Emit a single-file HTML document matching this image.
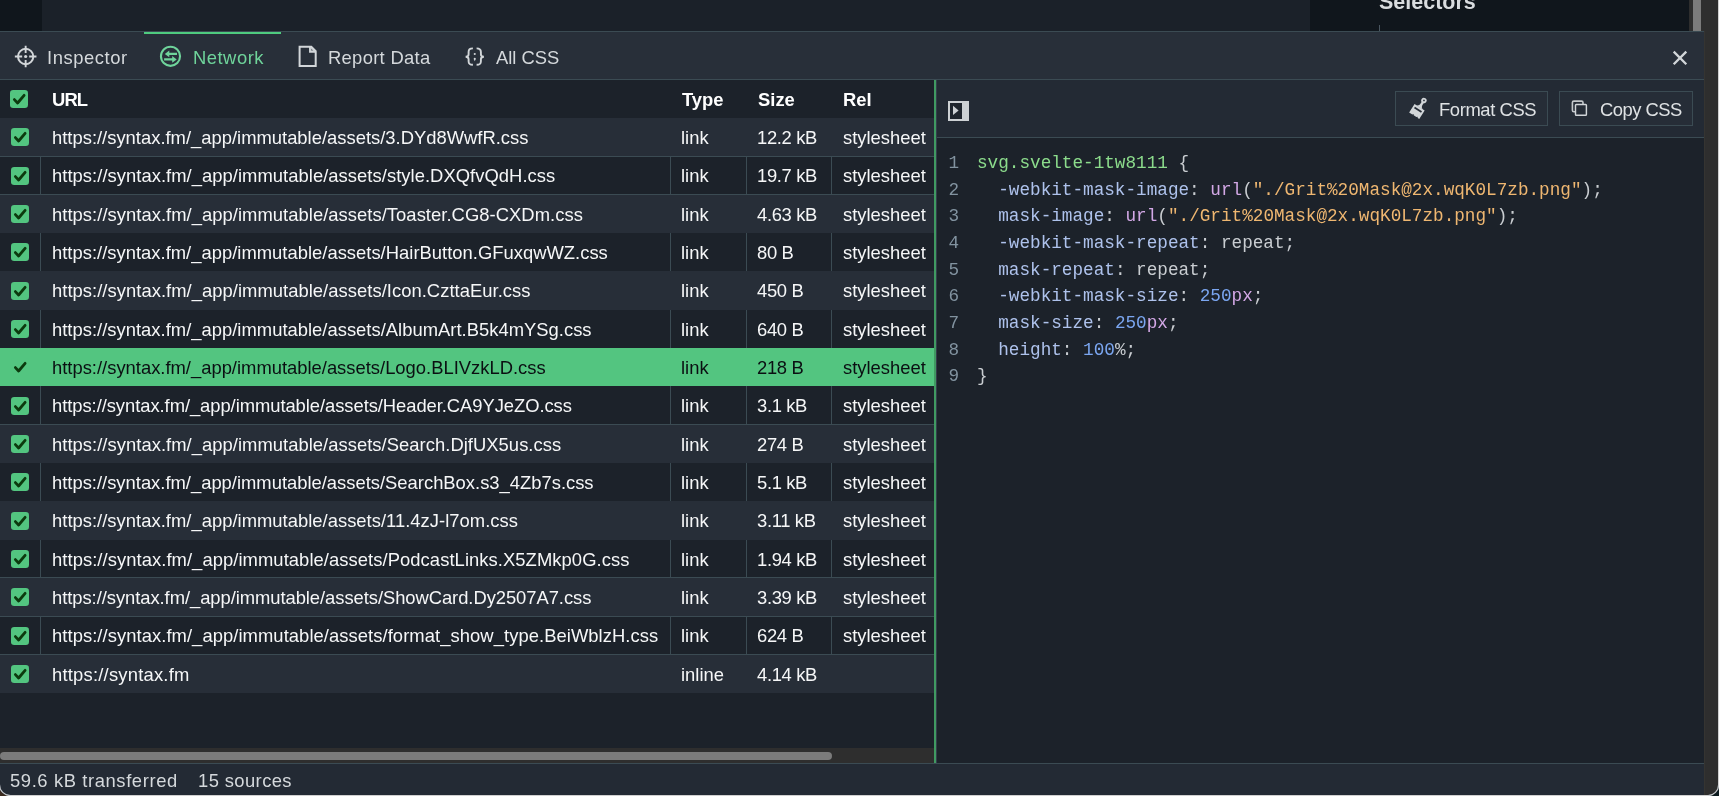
<!DOCTYPE html>
<html><head><meta charset="utf-8">
<style>
*{margin:0;padding:0;box-sizing:border-box}
html,body{width:1719px;height:796px;overflow:hidden;background:#1b2129}
body{position:relative;font-family:"Liberation Sans",sans-serif;font-size:18.4px;color:#f6f7f8}
.abs{position:absolute}
.t{position:absolute;white-space:nowrap;line-height:20px;height:20px;will-change:transform}
.row{position:absolute;left:0;width:934px;height:38.833px}
.vd{position:absolute;top:0;bottom:0;width:1px;background:#3b4b53}
.cbw{position:absolute;left:11px;top:10.2px;width:18px;height:18px}
.cb{display:block}
.url{letter-spacing:0px} .sz{letter-spacing:-0.35px}
.code{position:absolute;will-change:transform;white-space:pre;font-family:"Liberation Mono",monospace;font-size:17.68px;line-height:20px;height:20px;color:#c9cdd1}
.ln{position:absolute;will-change:transform;font-family:"Liberation Mono",monospace;font-size:17.68px;line-height:20px;height:20px;color:#8293a0;text-align:right;width:20px}
.sel{color:#8cdc8c} .pr{color:#aec2ec} .fn{color:#d3a8e6} .s{color:#efb771} .n{color:#7ba6f0} .u{color:#d3a8e6} .p{color:#c9cdd1} .v{color:#c9cdd1}
</style></head><body>

<div class="abs" style="left:0;top:0;width:42px;height:31px;background:#10161c"></div>
<div class="abs" style="left:1310px;top:0;width:379px;height:31px;background:#10161c"></div>
<div class="t" style="left:1379px;top:-8.35px;font-size:21.5px;font-weight:bold;color:#d9dcdf">Selectors</div>
<div class="abs" style="left:1379px;top:25px;width:1px;height:6px;background:#4a5660"></div>
<div class="abs" style="left:1689px;top:0;width:15px;height:31px;background:#2e2e2e"></div>
<div class="abs" style="left:1693px;top:0;width:8px;height:31px;background:#7b7b7b"></div>
<div class="abs" style="left:0;top:31px;width:1704px;height:49px;background:#282f39;border-top:1px solid #3b4b53;border-bottom:1px solid #3b4b53"></div>
<div class="abs" style="left:144px;top:32px;width:137px;height:2px;background:#4fcb7f"></div>
<svg class="abs" style="left:14px;top:45px" width="23" height="23" viewBox="0 0 23 23" fill="none" stroke="#d2d6d9" stroke-width="1.9">
<circle cx="11.65" cy="11.5" r="7.65" stroke-width="2"/><path d="M11.65 0.7V8.0M11.65 15.0V22.3M0.85 11.5H8.15M15.15 11.5H22.45"/><circle cx="11.65" cy="11.5" r="1.6" fill="#d2d6d9" stroke="none"/></svg>
<div class="t" style="left:47px;top:47.62px;color:#d5d9dc;letter-spacing:0.55px">Inspector</div>
<svg class="abs" style="left:159px;top:45px" width="23" height="23" viewBox="0 0 23 23" fill="#6fd49b" stroke="none">
<circle cx="11.5" cy="11.3" r="9.55" fill="none" stroke="#6fd49b" stroke-width="2.1"/>
<path d="M5.8 9.0L10.3 5.6V7.85H18.0V10.05H10.3V12.3Z"/>
<path d="M17.7 14.4L13.2 11.1V13.3H5.1V15.5H13.2V17.8Z"/></svg>
<div class="t" style="left:193px;top:47.62px;color:#6fd49b;letter-spacing:0.5px">Network</div>
<svg class="abs" style="left:297px;top:44px" width="22" height="24" viewBox="0 0 22 24" fill="none" stroke="#d2d6d9" stroke-width="2">
<path d="M2.6 2.8H14.3L18.7 7.2V21.9H2.6Z" stroke-linejoin="miter"/><path d="M13.0 2.8V7.9H18.7" stroke-width="1.9"/><path d="M13.9 3.6L17.9 7.3H13.9Z" fill="#d2d6d9" stroke="none"/><path d="M14.3 5.0L16.0 6.6H14.3Z" fill="#282f39" stroke="none"/></svg>
<div class="t" style="left:328px;top:47.62px;color:#d5d9dc;letter-spacing:0.3px">Report Data</div>
<svg class="abs" style="left:463px;top:45px" width="23" height="23" viewBox="0 0 23 23" fill="none" stroke="#d2d6d9" stroke-width="1.9">
<path d="M9.9 3.4C6.6 3.4 5.6 4.4 5.6 7.0V9.2C5.6 10.7 4.7 11.7 2.6 11.7C4.7 11.7 5.6 12.7 5.6 14.2V16.2C5.6 18.8 6.6 19.7 9.9 19.7"/>
<path d="M13.6 3.4C16.9 3.4 17.9 4.4 17.9 7.0V9.2C17.9 10.7 18.8 11.7 20.9 11.7C18.8 11.7 17.9 12.7 17.9 14.2V16.2C17.9 18.8 16.9 19.7 13.6 19.7"/>
<circle cx="11.75" cy="9.0" r="1.05" fill="#d2d6d9" stroke="none"/><path d="M10.7 13.9A1.05 1.05 0 0 1 12.8 13.9L11.75 16.3Z" fill="#d2d6d9" stroke="none"/></svg>
<div class="t" style="left:496px;top:47.62px;color:#d5d9dc">All CSS</div>
<svg class="abs" style="left:1666px;top:44px" width="28" height="28" viewBox="0 0 28 28" stroke="#d2d6d9" stroke-width="2.3"><path d="M7.7 7.6L20.3 20.2M20.3 7.6L7.7 20.2"/></svg>
<div class="abs" style="left:0;top:80px;width:934px;height:668px;background:#1c222a"></div>
<div class="cbw" style="left:10px;top:90px"><svg class="cb" width="18" height="18" viewBox="0 0 18 18"><rect x="0" y="0" width="18" height="18" rx="3.2" fill="#53c580"/><path d="M4.4 9.6 L7.6 13.0 L14.1 5.3" fill="none" stroke="#0c3a0e" stroke-width="2.8" stroke-linecap="round" stroke-linejoin="round"/></svg></div>
<div class="t" style="left:52px;top:89.62px;font-weight:bold;color:#ffffff;letter-spacing:-0.9px">URL</div>
<div class="t" style="left:682px;top:89.62px;font-weight:bold;color:#ffffff">Type</div>
<div class="t" style="left:758px;top:89.62px;font-weight:bold;color:#ffffff">Size</div>
<div class="t" style="left:843px;top:89.62px;font-weight:bold;color:#ffffff">Rel</div>
<div class="row" style="top:118.000px;background:#272e38;color:#f6f7f8;"><div class="cbw"><svg class="cb" width="18" height="18" viewBox="0 0 18 18"><rect x="0" y="0" width="18" height="18" rx="3.2" fill="#53c580"/><path d="M4.4 9.6 L7.6 13.0 L14.1 5.3" fill="none" stroke="#0c3a0e" stroke-width="2.8" stroke-linecap="round" stroke-linejoin="round"/></svg></div><div class="t url" style="left:52px;top:10.22px;letter-spacing:0.002px">https://syntax.fm/_app/immutable/assets/3.DYd8WwfR.css</div><div class="t" style="left:681px;top:10.22px">link</div><div class="t sz" style="left:757px;top:10.22px">12.2 kB</div><div class="t" style="left:843px;top:10.22px">stylesheet</div></div>
<div class="row" style="top:156.333px;background:#1c222a;color:#f6f7f8;"><div class="vd" style="left:40px"></div><div class="vd" style="left:670px"></div><div class="vd" style="left:746px"></div><div class="vd" style="left:831px"></div><div class="cbw"><svg class="cb" width="18" height="18" viewBox="0 0 18 18"><rect x="0" y="0" width="18" height="18" rx="3.2" fill="#53c580"/><path d="M4.4 9.6 L7.6 13.0 L14.1 5.3" fill="none" stroke="#0c3a0e" stroke-width="2.8" stroke-linecap="round" stroke-linejoin="round"/></svg></div><div class="t url" style="left:52px;top:9.89px;letter-spacing:0.042px">https://syntax.fm/_app/immutable/assets/style.DXQfvQdH.css</div><div class="t" style="left:681px;top:9.89px">link</div><div class="t sz" style="left:757px;top:9.89px">19.7 kB</div><div class="t" style="left:843px;top:9.89px">stylesheet</div></div>
<div class="row" style="top:194.666px;background:#272e38;color:#f6f7f8;"><div class="cbw"><svg class="cb" width="18" height="18" viewBox="0 0 18 18"><rect x="0" y="0" width="18" height="18" rx="3.2" fill="#53c580"/><path d="M4.4 9.6 L7.6 13.0 L14.1 5.3" fill="none" stroke="#0c3a0e" stroke-width="2.8" stroke-linecap="round" stroke-linejoin="round"/></svg></div><div class="t url" style="left:52px;top:10.56px;letter-spacing:0.041px">https://syntax.fm/_app/immutable/assets/Toaster.CG8-CXDm.css</div><div class="t" style="left:681px;top:10.56px">link</div><div class="t sz" style="left:757px;top:10.56px">4.63 kB</div><div class="t" style="left:843px;top:10.56px">stylesheet</div></div>
<div class="row" style="top:232.999px;background:#1c222a;color:#f6f7f8;"><div class="vd" style="left:40px"></div><div class="vd" style="left:670px"></div><div class="vd" style="left:746px"></div><div class="vd" style="left:831px"></div><div class="cbw"><svg class="cb" width="18" height="18" viewBox="0 0 18 18"><rect x="0" y="0" width="18" height="18" rx="3.2" fill="#53c580"/><path d="M4.4 9.6 L7.6 13.0 L14.1 5.3" fill="none" stroke="#0c3a0e" stroke-width="2.8" stroke-linecap="round" stroke-linejoin="round"/></svg></div><div class="t url" style="left:52px;top:10.23px;letter-spacing:0.013px">https://syntax.fm/_app/immutable/assets/HairButton.GFuxqwWZ.css</div><div class="t" style="left:681px;top:10.23px">link</div><div class="t sz" style="left:757px;top:10.23px">80 B</div><div class="t" style="left:843px;top:10.23px">stylesheet</div></div>
<div class="row" style="top:271.332px;background:#272e38;color:#f6f7f8;"><div class="cbw"><svg class="cb" width="18" height="18" viewBox="0 0 18 18"><rect x="0" y="0" width="18" height="18" rx="3.2" fill="#53c580"/><path d="M4.4 9.6 L7.6 13.0 L14.1 5.3" fill="none" stroke="#0c3a0e" stroke-width="2.8" stroke-linecap="round" stroke-linejoin="round"/></svg></div><div class="t url" style="left:52px;top:9.89px;letter-spacing:0.039px">https://syntax.fm/_app/immutable/assets/Icon.CzttaEur.css</div><div class="t" style="left:681px;top:9.89px">link</div><div class="t sz" style="left:757px;top:9.89px">450 B</div><div class="t" style="left:843px;top:9.89px">stylesheet</div></div>
<div class="row" style="top:309.665px;background:#1c222a;color:#f6f7f8;"><div class="vd" style="left:40px"></div><div class="vd" style="left:670px"></div><div class="vd" style="left:746px"></div><div class="vd" style="left:831px"></div><div class="cbw"><svg class="cb" width="18" height="18" viewBox="0 0 18 18"><rect x="0" y="0" width="18" height="18" rx="3.2" fill="#53c580"/><path d="M4.4 9.6 L7.6 13.0 L14.1 5.3" fill="none" stroke="#0c3a0e" stroke-width="2.8" stroke-linecap="round" stroke-linejoin="round"/></svg></div><div class="t url" style="left:52px;top:10.56px;letter-spacing:0.015px">https://syntax.fm/_app/immutable/assets/AlbumArt.B5k4mYSg.css</div><div class="t" style="left:681px;top:10.56px">link</div><div class="t sz" style="left:757px;top:10.56px">640 B</div><div class="t" style="left:843px;top:10.56px">stylesheet</div></div>
<div class="row" style="top:347.998px;background:#53c580;color:#0b0f12;"><div class="cbw"><svg class="cb" width="18" height="18" viewBox="0 0 18 18"><rect x="0" y="0" width="18" height="18" rx="3.2" fill="#53c580"/><path d="M4.4 9.6 L7.6 13.0 L14.1 5.3" fill="none" stroke="#0c3a0e" stroke-width="2.8" stroke-linecap="round" stroke-linejoin="round"/></svg></div><div class="t url" style="left:52px;top:10.23px;letter-spacing:-0.002px">https://syntax.fm/_app/immutable/assets/Logo.BLIVzkLD.css</div><div class="t" style="left:681px;top:10.23px">link</div><div class="t sz" style="left:757px;top:10.23px">218 B</div><div class="t" style="left:843px;top:10.23px">stylesheet</div></div>
<div class="row" style="top:386.331px;background:#1c222a;color:#f6f7f8;"><div class="vd" style="left:40px"></div><div class="vd" style="left:670px"></div><div class="vd" style="left:746px"></div><div class="vd" style="left:831px"></div><div class="cbw"><svg class="cb" width="18" height="18" viewBox="0 0 18 18"><rect x="0" y="0" width="18" height="18" rx="3.2" fill="#53c580"/><path d="M4.4 9.6 L7.6 13.0 L14.1 5.3" fill="none" stroke="#0c3a0e" stroke-width="2.8" stroke-linecap="round" stroke-linejoin="round"/></svg></div><div class="t url" style="left:52px;top:9.89px;letter-spacing:-0.059px">https://syntax.fm/_app/immutable/assets/Header.CA9YJeZO.css</div><div class="t" style="left:681px;top:9.89px">link</div><div class="t sz" style="left:757px;top:9.89px">3.1 kB</div><div class="t" style="left:843px;top:9.89px">stylesheet</div></div>
<div class="row" style="top:424.664px;background:#272e38;color:#f6f7f8;"><div class="cbw"><svg class="cb" width="18" height="18" viewBox="0 0 18 18"><rect x="0" y="0" width="18" height="18" rx="3.2" fill="#53c580"/><path d="M4.4 9.6 L7.6 13.0 L14.1 5.3" fill="none" stroke="#0c3a0e" stroke-width="2.8" stroke-linecap="round" stroke-linejoin="round"/></svg></div><div class="t url" style="left:52px;top:10.56px;letter-spacing:0.038px">https://syntax.fm/_app/immutable/assets/Search.DjfUX5us.css</div><div class="t" style="left:681px;top:10.56px">link</div><div class="t sz" style="left:757px;top:10.56px">274 B</div><div class="t" style="left:843px;top:10.56px">stylesheet</div></div>
<div class="row" style="top:462.997px;background:#1c222a;color:#f6f7f8;"><div class="vd" style="left:40px"></div><div class="vd" style="left:670px"></div><div class="vd" style="left:746px"></div><div class="vd" style="left:831px"></div><div class="cbw"><svg class="cb" width="18" height="18" viewBox="0 0 18 18"><rect x="0" y="0" width="18" height="18" rx="3.2" fill="#53c580"/><path d="M4.4 9.6 L7.6 13.0 L14.1 5.3" fill="none" stroke="#0c3a0e" stroke-width="2.8" stroke-linecap="round" stroke-linejoin="round"/></svg></div><div class="t url" style="left:52px;top:10.23px;letter-spacing:-0.003px">https://syntax.fm/_app/immutable/assets/SearchBox.s3_4Zb7s.css</div><div class="t" style="left:681px;top:10.23px">link</div><div class="t sz" style="left:757px;top:10.23px">5.1 kB</div><div class="t" style="left:843px;top:10.23px">stylesheet</div></div>
<div class="row" style="top:501.330px;background:#272e38;color:#f6f7f8;"><div class="cbw"><svg class="cb" width="18" height="18" viewBox="0 0 18 18"><rect x="0" y="0" width="18" height="18" rx="3.2" fill="#53c580"/><path d="M4.4 9.6 L7.6 13.0 L14.1 5.3" fill="none" stroke="#0c3a0e" stroke-width="2.8" stroke-linecap="round" stroke-linejoin="round"/></svg></div><div class="t url" style="left:52px;top:9.89px;letter-spacing:0.022px">https://syntax.fm/_app/immutable/assets/11.4zJ-l7om.css</div><div class="t" style="left:681px;top:9.89px">link</div><div class="t sz" style="left:757px;top:9.89px">3.11 kB</div><div class="t" style="left:843px;top:9.89px">stylesheet</div></div>
<div class="row" style="top:539.663px;background:#1c222a;color:#f6f7f8;"><div class="vd" style="left:40px"></div><div class="vd" style="left:670px"></div><div class="vd" style="left:746px"></div><div class="vd" style="left:831px"></div><div class="cbw"><svg class="cb" width="18" height="18" viewBox="0 0 18 18"><rect x="0" y="0" width="18" height="18" rx="3.2" fill="#53c580"/><path d="M4.4 9.6 L7.6 13.0 L14.1 5.3" fill="none" stroke="#0c3a0e" stroke-width="2.8" stroke-linecap="round" stroke-linejoin="round"/></svg></div><div class="t url" style="left:52px;top:10.56px;letter-spacing:0.062px">https://syntax.fm/_app/immutable/assets/PodcastLinks.X5ZMkp0G.css</div><div class="t" style="left:681px;top:10.56px">link</div><div class="t sz" style="left:757px;top:10.56px">1.94 kB</div><div class="t" style="left:843px;top:10.56px">stylesheet</div></div>
<div class="row" style="top:577.996px;background:#272e38;color:#f6f7f8;"><div class="cbw"><svg class="cb" width="18" height="18" viewBox="0 0 18 18"><rect x="0" y="0" width="18" height="18" rx="3.2" fill="#53c580"/><path d="M4.4 9.6 L7.6 13.0 L14.1 5.3" fill="none" stroke="#0c3a0e" stroke-width="2.8" stroke-linecap="round" stroke-linejoin="round"/></svg></div><div class="t url" style="left:52px;top:10.23px;letter-spacing:-0.057px">https://syntax.fm/_app/immutable/assets/ShowCard.Dy2507A7.css</div><div class="t" style="left:681px;top:10.23px">link</div><div class="t sz" style="left:757px;top:10.23px">3.39 kB</div><div class="t" style="left:843px;top:10.23px">stylesheet</div></div>
<div class="row" style="top:616.329px;background:#1c222a;color:#f6f7f8;"><div class="vd" style="left:40px"></div><div class="vd" style="left:670px"></div><div class="vd" style="left:746px"></div><div class="vd" style="left:831px"></div><div class="cbw"><svg class="cb" width="18" height="18" viewBox="0 0 18 18"><rect x="0" y="0" width="18" height="18" rx="3.2" fill="#53c580"/><path d="M4.4 9.6 L7.6 13.0 L14.1 5.3" fill="none" stroke="#0c3a0e" stroke-width="2.8" stroke-linecap="round" stroke-linejoin="round"/></svg></div><div class="t url" style="left:52px;top:9.90px;letter-spacing:0.062px">https://syntax.fm/_app/immutable/assets/format_show_type.BeiWblzH.css</div><div class="t" style="left:681px;top:9.90px">link</div><div class="t sz" style="left:757px;top:9.90px">624 B</div><div class="t" style="left:843px;top:9.90px">stylesheet</div></div>
<div class="row" style="top:654.662px;background:#272e38;color:#f6f7f8;height:38.4px;"><div class="cbw"><svg class="cb" width="18" height="18" viewBox="0 0 18 18"><rect x="0" y="0" width="18" height="18" rx="3.2" fill="#53c580"/><path d="M4.4 9.6 L7.6 13.0 L14.1 5.3" fill="none" stroke="#0c3a0e" stroke-width="2.8" stroke-linecap="round" stroke-linejoin="round"/></svg></div><div class="t url" style="left:52px;top:10.56px;letter-spacing:0.213px">https://syntax.fm</div><div class="t" style="left:681px;top:10.56px">inline</div><div class="t sz" style="left:757px;top:10.56px">4.14 kB</div></div>
<div class="abs" style="left:0;top:156px;width:934px;height:1px;background:#3b4b53"></div>
<div class="abs" style="left:0;top:194px;width:934px;height:1px;background:#3b4b53"></div>
<div class="abs" style="left:0;top:424px;width:934px;height:1px;background:#3b4b53"></div>
<div class="abs" style="left:0;top:577px;width:934px;height:1px;background:#3b4b53"></div>
<div class="abs" style="left:0;top:616px;width:934px;height:1px;background:#3b4b53"></div>
<div class="abs" style="left:0;top:654px;width:934px;height:1px;background:#3b4b53"></div>
<div class="abs" style="left:0;top:748px;width:934px;height:15px;background:#2e2e2e"></div>
<div class="abs" style="left:0;top:752px;width:832px;height:8px;border-radius:4px;background:#7b7b7b"></div>
<div class="abs" style="left:934px;top:80px;width:2px;height:683px;background:#409a62"></div>
<div class="abs" style="left:936px;top:80px;width:1px;height:683px;background:#353e4b"></div>
<div class="abs" style="left:937px;top:80px;width:767px;height:58px;background:#232a34;border-bottom:1px solid #3b4b53"></div>
<div class="abs" style="left:937px;top:138px;width:767px;height:625px;background:#1c222a"></div>
<svg class="abs" style="left:948px;top:101px" width="21" height="20" viewBox="0 0 21 20">
<rect x="0" y="0" width="21" height="20" fill="#cdd1d4"/><rect x="2" y="2" width="12" height="16" fill="#1f252d"/><path d="M5.0 4.8L10.6 9.5L5.0 14.1Z" fill="#cdd1d4"/></svg>
<div class="abs" style="left:1395px;top:91px;width:153px;height:35px;border:1px solid #3b4b53;background:#262d37"></div>
<svg class="abs" style="left:1404px;top:94px" width="28" height="28" viewBox="0 0 28 28" fill="#d2d6d9">
<g transform="translate(15.6 13.25) rotate(32.7)">
<path d="M-6 0H6V10H4.2L3.4 9.0L2.6 10H-0.6L-1.4 9.0L-2.2 10H-6Z"/>
<path d="M-4.2 0.2C-2.0 -0.5 -1.3 -1.6 -1.2 -3.4V-6.4H1.2V-3.4C1.3 -1.6 2.0 -0.5 4.2 0.2Z"/>
<circle cx="0" cy="-8.0" r="2.7"/>
</g>
<g transform="translate(15.6 13.25) rotate(32.7)" fill="#262d37">
<rect x="-4.15" y="2.05" width="8.3" height="1.8"/>
<circle cx="0" cy="-8.1" r="0.85"/>
</g></svg>
<div class="t" style="left:1439px;top:99.82px;color:#dfe2e4;letter-spacing:-0.4px">Format CSS</div>
<div class="abs" style="left:1559px;top:91px;width:134px;height:35px;border:1px solid #3b4b53;background:#262d37"></div>
<svg class="abs" style="left:1566px;top:94px" width="28" height="28" viewBox="0 0 28 28" fill="none">
<rect x="6.4" y="7.1" width="10.6" height="10.7" rx="1.5" stroke="#c4c8cb" stroke-width="1.6"/>
<rect x="9.5" y="10.55" width="10.9" height="10.75" rx="0.8" fill="#262d37" stroke="#d2d6d9" stroke-width="1.45"/></svg>
<div class="t" style="left:1600px;top:99.82px;color:#dfe2e4;letter-spacing:-0.5px">Copy CSS</div>
<div class="ln" style="left:939px;top:153.20px">1</div>
<div class="code" style="left:976.7px;top:153.20px"><span class="sel">svg.svelte-1tw8111</span> <span class="p">{</span></div>
<div class="ln" style="left:939px;top:179.85px">2</div>
<div class="code" style="left:976.7px;top:179.85px">  <span class="pr">-webkit-mask-image</span><span class="p">:</span> <span class="fn">url</span><span class="p">(</span><span class="s">"./Grit%20Mask@2x.wqK0L7zb.png"</span><span class="p">);</span></div>
<div class="ln" style="left:939px;top:205.90px">3</div>
<div class="code" style="left:976.7px;top:205.90px">  <span class="pr">mask-image</span><span class="p">:</span> <span class="fn">url</span><span class="p">(</span><span class="s">"./Grit%20Mask@2x.wqK0L7zb.png"</span><span class="p">);</span></div>
<div class="ln" style="left:939px;top:233.15px">4</div>
<div class="code" style="left:976.7px;top:233.15px">  <span class="pr">-webkit-mask-repeat</span><span class="p">:</span> <span class="v">repeat</span><span class="p">;</span></div>
<div class="ln" style="left:939px;top:259.80px">5</div>
<div class="code" style="left:976.7px;top:259.80px">  <span class="pr">mask-repeat</span><span class="p">:</span> <span class="v">repeat</span><span class="p">;</span></div>
<div class="ln" style="left:939px;top:286.45px">6</div>
<div class="code" style="left:976.7px;top:286.45px">  <span class="pr">-webkit-mask-size</span><span class="p">:</span> <span class="n">250</span><span class="u">px</span><span class="p">;</span></div>
<div class="ln" style="left:939px;top:313.10px">7</div>
<div class="code" style="left:976.7px;top:313.10px">  <span class="pr">mask-size</span><span class="p">:</span> <span class="n">250</span><span class="u">px</span><span class="p">;</span></div>
<div class="ln" style="left:939px;top:339.75px">8</div>
<div class="code" style="left:976.7px;top:339.75px">  <span class="pr">height</span><span class="p">:</span> <span class="n">100</span><span class="p">%;</span></div>
<div class="ln" style="left:939px;top:366.40px">9</div>
<div class="code" style="left:976.7px;top:366.40px"><span class="p">}</span></div>
<div class="abs" style="left:0;top:763px;width:1704px;height:33px;background:#232a34;border-top:1px solid #3b4b53"></div>
<div class="t" style="left:10px;top:770.62px;color:#d5d9dc;letter-spacing:0.6px">59.6 kB transferred</div>
<div class="t" style="left:198px;top:770.62px;color:#d5d9dc;letter-spacing:0.4px">15 sources</div>
<div class="abs" style="left:1704px;top:0px;width:15px;height:796px;background:#2e2e2e"></div>
<div class="abs" style="left:1704px;top:31px;width:1px;height:765px;background:#353431"></div>
<div class="abs" style="left:1718px;top:0;width:1px;height:796px;background:#d0d0d0"></div>
<div class="abs" style="left:0;top:795px;width:1719px;height:1px;background:#d0d0d0"></div>
<svg class="abs" style="left:0;top:780px" width="16" height="16" viewBox="0 780 16 16"><path d="M-1 784.5 A11 11 0 0 0 10.5 796 L-1 796Z" fill="#3a2a1e"/><path d="M-0.5 784.5 A11 11 0 0 0 10.5 795.5" fill="none" stroke="#c8ccd0" stroke-width="1.1"/></svg>
<svg class="abs" style="left:1703px;top:780px" width="16" height="16" viewBox="1703 780 16 16"><path d="M1719 785 A10.5 10.5 0 0 1 1708 796 L1719 796Z" fill="#0b1a1e"/><path d="M1718.5 785 A10.5 10.5 0 0 1 1708 795.5" fill="none" stroke="#c8ccd0" stroke-width="1.1"/></svg>
</body></html>
